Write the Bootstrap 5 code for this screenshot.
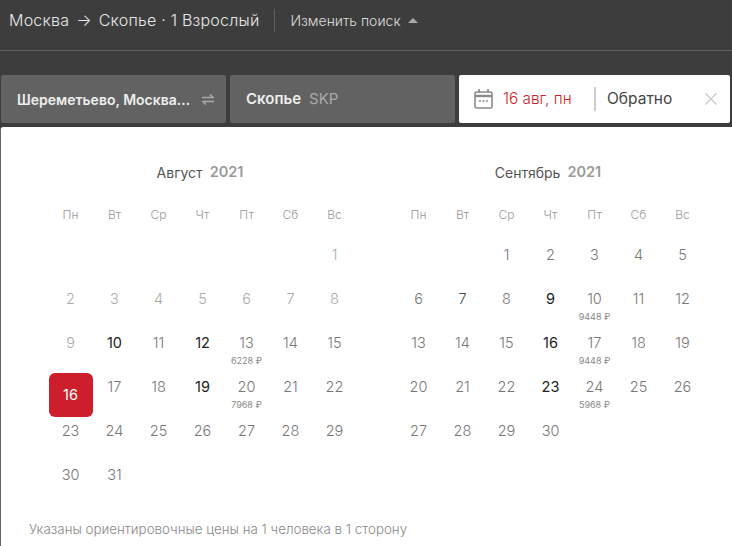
<!DOCTYPE html>
<html lang="ru"><head><meta charset="utf-8"><title>Календарь</title>
<link href="https://cdn.jsdelivr.net/npm/bootstrap@5.3.0/dist/css/bootstrap.min.css" rel="stylesheet">
<style>
html,body{height:546px;overflow:hidden}
body{background:#3d3d3d;font-family:"Inter","Noto Sans",sans-serif;color:#555}
.topline{height:51px;border-bottom:1px solid #5e5e5e;padding:0 0 10px 9px;color:#e8e8e8}
.route{font-size:16px;letter-spacing:.22px;font-weight:300}
.arrow{margin:0 7px}
.vsep{width:1px;height:23px;background:#5e5e5e;margin:0 15px}
.change{font-size:14px;color:#ddd;font-weight:300}
.tri{width:0;height:0;border:5px solid transparent;border-top:0;border-bottom:5px solid #aaa;margin-left:7px}
.fields{padding:24px 2px 0 1px;gap:4px}
.fld{height:48px;border-radius:2px;background:#626262;width:225px;padding:0 12px 0 16px;color:#eee;font-size:15px;font-weight:600}
.fld .from{font-size:14px}
.fld .iata{font-weight:400;color:#aaa;margin-left:8px}
.fld-date{background:#fff;width:271px;padding:0 13px 0 15px;font-weight:300;font-size:15px}
.red{color:#cc1f2b;margin-left:10px;width:91px;font-size:15.300px}
.vsep2{width:2px;height:24px;background:#ccc;margin:0 11px 0 0}
.back{color:#444;font-size:15.500px;font-weight:400}
.panel{margin:4px 0 0;border-left:1px solid #666;background:#fff;height:419px;border-radius:3px 0 0 0;position:relative}
.months{padding:0 28px 0 48px;gap:40px}
.month{width:308px}
.mtitle{height:42px;margin-top:24px;padding-right:6px;font-size:14px;color:#555;gap:7px}
.mtitle b{font-weight:600;color:#999;font-size:14.500px}
.days{display:grid;grid-template-columns:repeat(7,44px);grid-auto-rows:44px}
.wdrow{margin-bottom:4px}
.wd{font-size:12px;color:#999;font-weight:300;padding-right:1px}
.d{font-size:14.500px;color:#777;font-weight:300;padding:0 1px 16px 0;position:relative}
.d.off{color:#aaa}
.d.hi{color:#222;font-weight:400}
.d.mid{color:#444}
.d.sel{background:#cc1f2b;color:#fff;border-radius:6px;padding-bottom:0;font-weight:400}
.d small{position:absolute;left:0;right:1px;top:27px;text-align:center;font-size:9px;color:#888;line-height:10px;white-space:nowrap;font-weight:400}
.note{position:absolute;left:28px;top:392px;font-size:13.350px;color:#888;font-weight:300}
</style></head><body>
<div class="topline d-flex align-items-center">
 <span class="route">Москва<span class="arrow">→</span>Скопье · 1 Взрослый</span><span class="vsep"></span><span class="change">Изменить поиск</span><span class="tri"></span>
</div>
<div class="fields d-flex">
 <div class="fld d-flex align-items-center justify-content-between"><span class="from">Шереметьево, Москва…</span>
  <svg width="12" height="13" viewBox="0 0 12 13" fill="none" stroke="#a8a8a8" stroke-width="1.6"><path d="M0 4.500h11L8 1.500M12 8.500H1L4 11.500"/></svg></div>
 <div class="fld d-flex align-items-center"><span>Скопье</span><span class="iata">SKP</span></div>
 <div class="fld fld-date d-flex align-items-center">
  <svg width="19" height="20" viewBox="0 0 19 20" fill="none"><rect x="1" y="3" width="17" height="16" rx="1.5" stroke="#8a8a8a" stroke-width="1.6"/><path d="M1 7h17" stroke="#8a8a8a" stroke-width="2.4"/><path d="M5 0v4M14 0v4" stroke="#8a8a8a" stroke-width="1.6"/><path d="M5 12h2M8.500 12h2M12 12h2" stroke="#8a8a8a" stroke-width="1.4"/></svg>
  <span class="red">16 авг, пн</span><span class="vsep2"></span><span class="back flex-grow-1">Обратно</span>
  <svg width="12" height="12" viewBox="0 0 12 12" stroke="#c8c8c8" stroke-width="1.3"><path d="M.5.500l11 11M11.500.500l-11 11"/></svg>
 </div>
</div>
<div class="panel">
 <div class="months d-flex" id="m"></div>
 <div class="note">Указаны ориентировочные цены на 1 человека в 1 сторону</div>
</div>
<script>
const wd=['Пн','Вт','Ср','Чт','Пт','Сб','Вс'];
function cal(name,start,n,off,hi,mid,prices,sel){
 let h=`<div class="month"><div class="mtitle d-flex align-items-center justify-content-center"><span>${name}</span><b>2021</b></div><div class="days wdrow">`;
 wd.forEach(w=>h+=`<div class="wd d-flex align-items-center justify-content-center">${w}</div>`);
 h+='</div><div class="days">';
 for(let i=0;i<start;i++)h+='<div></div>';
 for(let d=1;d<=n;d++){
  let c='d d-flex align-items-center justify-content-center';
  if(d<=off)c+=' off'; if(hi.includes(d))c+=' hi'; if(mid.includes(d))c+=' mid'; if(d===sel)c+=' sel';
  h+=`<div class="${c}">${d}${prices[d]?`<small>${prices[d]} ₽</small>`:''}</div>`;
 }
 return h+'</div></div>';
}
document.getElementById('m').innerHTML=
 cal('Август',6,31,9,[10,12,19],[],{13:6228,20:7968},16)+
 cal('Сентябрь',2,30,0,[9,16,23],[7],{10:9448,17:9448,24:5968},0);
</script>
<script src="https://cdn.jsdelivr.net/npm/bootstrap@5.3.0/dist/js/bootstrap.bundle.min.js"></script>
</body></html>
